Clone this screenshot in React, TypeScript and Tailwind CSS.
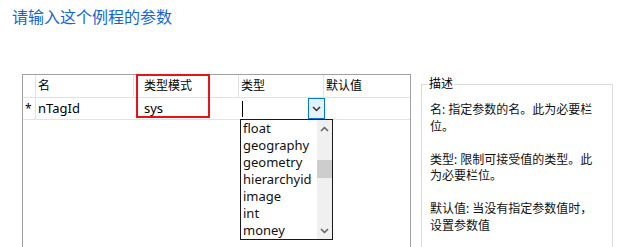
import React from 'react';

const TYPES = ['float', 'geography', 'geometry', 'hierarchyid', 'image', 'int', 'money'];

const cjk = "font-['Microsoft_YaHei_UI','Noto_Sans','Noto_Sans_CJK_SC',sans-serif]";

function Chevron({ up = false, className = '' }: { up?: boolean; className?: string }) {
  return (
    <svg width="9" height="6" viewBox="0 0 9 6" className={className}>
      <path
        d={up ? 'M1 5 L4.5 1.5 L8 5' : 'M1 1 L4.5 4.5 L8 1'}
        fill="none"
        stroke="currentColor"
        strokeWidth={1.5}
      />
    </svg>
  );
}

export default function App() {
  return (
    <div className={`w-[620px] h-[247px] overflow-hidden bg-white text-black ${cjk}`}>
      {/* Title */}
      <div className="pl-[12px] pt-[7px] h-[74px] text-[16px] leading-[20px] text-[#1467d2]">
        请输入这个例程的参数
      </div>

      <div className="flex">
        {/* Parameter grid */}
        <div className="relative ml-[22px] w-[389px] h-[200px] border-l border-t border-r border-[#a0a0a0]">
          {/* header */}
          <div className="flex h-[23px] border-b border-[#e3e3e3] text-[12px] leading-[22px]">
            <div className="w-[13px] border-r border-[#e3e3e3]" />
            <div className="w-[98px] pl-[2px] border-r border-[#e3e3e3]">名</div>
            <div className="w-[105px] pl-[10px] border-r border-[#e3e3e3]">类型模式</div>
            <div className="w-[85px] pl-[2px] border-r border-[#e3e3e3]">类型</div>
            <div className="flex-1 pl-[2px]">默认值</div>
          </div>
          {/* row 1 */}
          <div className="flex h-[22px] border-b border-[#e3e3e3] text-[13px] leading-[21px]">
            <div className="w-[13px] border-r border-[#e3e3e3] pl-[2px] text-[12px]">*</div>
            <div className="w-[98px] pl-[2px]">nTagId</div>
            <div className="w-[106px] pl-[10px]">sys</div>
            <div className="w-[85px] flex items-stretch">
              <div className="flex-1 flex items-center pl-[2px]">
                <div className="w-px h-[16px] bg-black" />
              </div>
              <div className="w-[17px] border border-[#0078d7] bg-[#e5f1fb] flex items-center justify-center text-[#333]">
                <Chevron />
              </div>
            </div>
            <div className="flex-1" />
          </div>

          {/* red annotation box */}
          <div className="absolute left-[113px] top-[-1px] w-[74px] h-[44px] border-2 border-[#ee1111]" />

          {/* open dropdown list */}
          <div className="absolute left-[217px] top-[44px] w-[93px] h-[121px] border border-[#1a1a1a] bg-white flex text-[13px]">
            <div className="flex-1 pl-[2px]">
              {TYPES.map(t => (
                <div key={t} className="h-[17px] leading-[17px] text-[#111]">{t}</div>
              ))}
            </div>
            <div className="w-[15px] bg-[#f0f0f0] flex flex-col items-center text-[#606060]">
              <div className="h-[17px] flex items-center justify-center"><Chevron up /></div>
              <div className="h-[23px]" />
              <div className="w-[15px] h-[18px] bg-[#cdcdcd]" />
              <div className="flex-1" />
              <div className="h-[17px] flex items-center justify-center"><Chevron /></div>
            </div>
          </div>
        </div>

        {/* Description group box */}
        <div className="relative ml-[10px] mt-[10px] w-[192px] h-[200px] border border-[#dcdcdc]">
          <div className="absolute left-[6px] top-[-9px] px-[1px] bg-white text-[12px] leading-[16px]">描述</div>
          <div className="pl-[8px] pt-[17px] text-[12px] leading-[16.5px] text-[#111]">
            <div>名: 指定参数的名。此为必要栏<br />位。</div>
            <div className="mt-[16.5px]">类型: 限制可接受值的类型。此<br />为必要栏位。</div>
            <div className="mt-[16.5px]">默认值: 当没有指定参数值时，<br />设置参数值</div>
          </div>
        </div>
      </div>
    </div>
  );
}
